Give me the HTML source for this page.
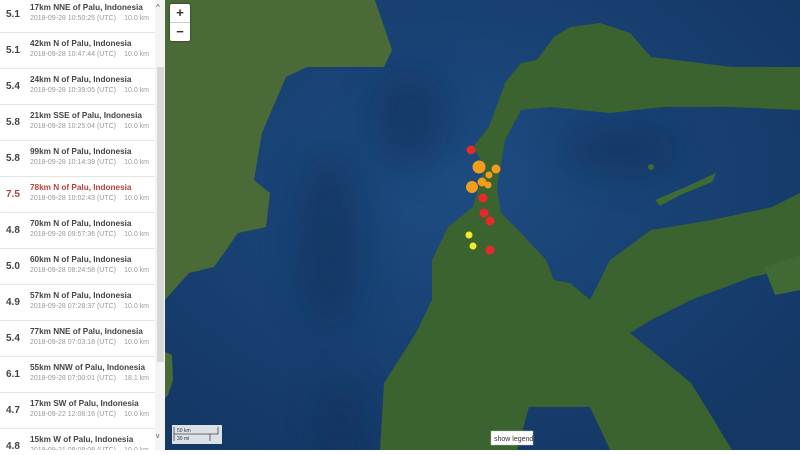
<!DOCTYPE html>
<html><head><meta charset="utf-8"><style>
*{margin:0;padding:0;box-sizing:border-box}
body{width:800px;height:450px;overflow:hidden;position:relative;font-family:"Liberation Sans",sans-serif;background:#fff}
#list{position:absolute;left:0;top:0;width:155px;height:450px;overflow:hidden;background:#fff}
.row{position:absolute;left:0;width:155px;height:36px;border-bottom:1px solid #e4e4e4}
.mag{position:absolute;left:6px;top:12px;font-size:10px;color:#444;width:18px;font-weight:600}
.t{position:absolute;left:30px;top:6px;font-size:8.2px;font-weight:bold;color:#444;white-space:nowrap}
.d{position:absolute;left:30px;top:18px;font-size:7px;color:#999;white-space:nowrap}
.k{position:absolute;right:6px;top:18px;font-size:7px;color:#999}
.red .mag,.red .t{color:#b94040}
#sb{position:absolute;left:155px;top:0;width:10px;height:450px;background:#f4f4f4}
#th{position:absolute;left:157px;top:67px;width:7px;height:295px;background:#d8d8d8}
#map{position:absolute;left:165px;top:0;width:635px;height:450px;background:#173b6c}
.zb{position:absolute;left:170px;top:4px;width:20px;height:37px;background:#fff;border-radius:2px;box-shadow:0 0 2px rgba(0,0,0,.5)}
.zb div{height:18px;text-align:center;font-size:13px;font-weight:bold;line-height:18px;color:#333}
</style></head><body>
<div id="map"><svg width="635" height="450" viewBox="165 0 635 450">
<defs><radialGradient id="oc" cx="45%" cy="40%" r="70%"><stop offset="0" stop-color="#1d4c82"/><stop offset="1" stop-color="#143765"/></radialGradient>
<filter id="bl"><feGaussianBlur stdDeviation="18"/></filter></defs>
<rect x="165" y="0" width="635" height="450" fill="url(#oc)"/>
<g filter="url(#bl)" fill="#0e2a52" opacity=".45"><ellipse cx="330" cy="240" rx="35" ry="90"/><ellipse cx="410" cy="120" rx="40" ry="50"/><ellipse cx="340" cy="420" rx="20" ry="40"/><ellipse cx="620" cy="150" rx="60" ry="25"/></g>
<path d="M165,0 L375,0 L392,50 L384,67 L307,67 L286,77 L262,133 L254,180 L270,193 L266,227 L238,233 L214,267 L189,273 L165,300Z" fill="#4a6a38"/>
<path d="M165,352 L172,355 L173,380 L168,395 L165,398Z" fill="#4a6a38"/>
<path d="M570,27 L600,23 L630,33 L651,57 L732,67 L800,67 L800,110 L732,107 L663,107 L610,113 L550,107 L521,110 L505,140 L497,187 L501,213 L521,233 L546,260 L554,280 L570,283 L590,300 L610,260 L651,230 L712,220 L772,207 L800,193 L800,267 L752,277 L691,300 L651,320 L630,333 L651,350 L691,383 L712,417 L732,450 L610,450 L590,407 L529,407 L517,450 L380,450 L384,383 L416,333 L432,300 L432,260 L448,227 L473,207 L485,167 L473,147 L489,127 L505,83 L521,63 L537,60 L554,37Z" fill="#3a632f"/>
<path d="M655,200 L690,185 L716,173 L712,182 L680,195 L660,206Z" fill="#3f6a33"/>
<path d="M764,267 L800,255 L800,290 L775,295Z" fill="#3f6a33"/>
<circle cx="651" cy="167" r="3" fill="#3f6a33"/>
<g fill="#e8292a"><circle cx="471" cy="150" r="4.5"/><circle cx="483" cy="198" r="4.5"/><circle cx="484" cy="213" r="4.5"/><circle cx="490" cy="221" r="4.5"/><circle cx="490" cy="250" r="4.5"/></g>
<g fill="#f19c1a"><circle cx="479" cy="167" r="6.5"/><circle cx="496" cy="169" r="4.5"/><circle cx="489" cy="175" r="3.5"/><circle cx="482" cy="182" r="4.5"/><circle cx="472" cy="187" r="6"/><circle cx="488" cy="185" r="3.5"/></g>
<g fill="#f4ea25"><circle cx="469" cy="235" r="3.5"/><circle cx="473" cy="246" r="3.5"/></g>
<rect x="172" y="425" width="50" height="19" fill="#fff" opacity=".85"/>
<path d="M174,427 V434 H218 V427 M174,441 V434 H210 V441" stroke="#444" fill="none" stroke-width=".8"/>
<text x="177" y="432" font-size="5" fill="#333">50 km</text><text x="177" y="440" font-size="5" fill="#333">30 mi</text>
<rect x="491" y="431" width="42" height="14" fill="#fff" stroke="#bbb" stroke-width=".5"/>
<text x="494" y="441" font-size="7" fill="#333" font-family="Liberation Sans">show legend</text>
</svg></div>
<div class="zb"><div>+</div><div style="border-top:1px solid #ccc">−</div></div>
<div id="list">
<div class="row" style="top:-3px"><span class="mag">5.1</span><span class="t">17km NNE of Palu, Indonesia</span><span class="d">2018-09-28 10:50:25 (UTC)</span><span class="k">10.0 km</span></div>
<div class="row" style="top:33px"><span class="mag">5.1</span><span class="t">42km N of Palu, Indonesia</span><span class="d">2018-09-28 10:47:44 (UTC)</span><span class="k">10.0 km</span></div>
<div class="row" style="top:69px"><span class="mag">5.4</span><span class="t">24km N of Palu, Indonesia</span><span class="d">2018-09-28 10:39:05 (UTC)</span><span class="k">10.0 km</span></div>
<div class="row" style="top:105px"><span class="mag">5.8</span><span class="t">21km SSE of Palu, Indonesia</span><span class="d">2018-09-28 10:25:04 (UTC)</span><span class="k">10.0 km</span></div>
<div class="row" style="top:141px"><span class="mag">5.8</span><span class="t">99km N of Palu, Indonesia</span><span class="d">2018-09-28 10:14:39 (UTC)</span><span class="k">10.0 km</span></div>
<div class="row red" style="top:177px"><span class="mag">7.5</span><span class="t">78km N of Palu, Indonesia</span><span class="d">2018-09-28 10:02:43 (UTC)</span><span class="k">10.0 km</span></div>
<div class="row" style="top:213px"><span class="mag">4.8</span><span class="t">70km N of Palu, Indonesia</span><span class="d">2018-09-28 09:57:36 (UTC)</span><span class="k">10.0 km</span></div>
<div class="row" style="top:249px"><span class="mag">5.0</span><span class="t">60km N of Palu, Indonesia</span><span class="d">2018-09-28 08:24:58 (UTC)</span><span class="k">10.0 km</span></div>
<div class="row" style="top:285px"><span class="mag">4.9</span><span class="t">57km N of Palu, Indonesia</span><span class="d">2018-09-28 07:28:37 (UTC)</span><span class="k">10.0 km</span></div>
<div class="row" style="top:321px"><span class="mag">5.4</span><span class="t">77km NNE of Palu, Indonesia</span><span class="d">2018-09-28 07:03:18 (UTC)</span><span class="k">10.0 km</span></div>
<div class="row" style="top:357px"><span class="mag">6.1</span><span class="t">55km NNW of Palu, Indonesia</span><span class="d">2018-09-28 07:00:01 (UTC)</span><span class="k">18.1 km</span></div>
<div class="row" style="top:393px"><span class="mag">4.7</span><span class="t">17km SW of Palu, Indonesia</span><span class="d">2018-09-22 12:08:16 (UTC)</span><span class="k">10.0 km</span></div>
<div class="row" style="top:429px"><span class="mag">4.8</span><span class="t">15km W of Palu, Indonesia</span><span class="d">2018-09-21 08:08:08 (UTC)</span><span class="k">10.0 km</span></div>
</div>
<div id="sb"></div><div id="th"></div>
<div style="position:absolute;left:156px;top:3px;font-size:8px;color:#555">^</div>
<div style="position:absolute;left:156px;top:433px;font-size:7px;color:#555">v</div>
</body></html>
